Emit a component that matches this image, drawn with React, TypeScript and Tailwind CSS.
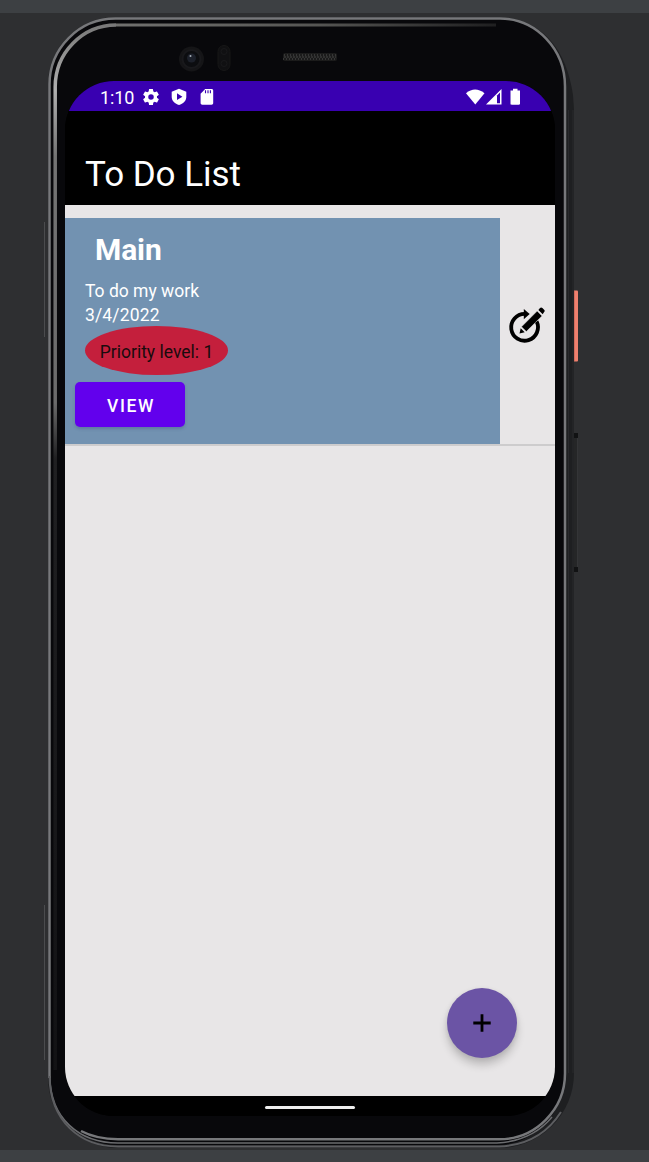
import React from "react";

function PhoneFrame() {
  return (
    <svg className="absolute inset-0" width="649" height="1162" viewBox="0 0 649 1162" fill="none" aria-hidden="true">
      <defs>
        <linearGradient id="inner" x1="0" y1="23" x2="0" y2="1140" gradientUnits="userSpaceOnUse">
          <stop offset="0" stopColor="#777777" />
          <stop offset="0.06" stopColor="#b0b0b0" />
          <stop offset="0.12" stopColor="#747474" />
          <stop offset="0.34" stopColor="#6b6b6b" />
          <stop offset="0.39" stopColor="#202022" />
          <stop offset="1" stopColor="#111113" />
        </linearGradient>
        <linearGradient id="topEdge" x1="110" y1="0" x2="530" y2="0" gradientUnits="userSpaceOnUse">
          <stop offset="0" stopColor="#727270" />
          <stop offset="0.5" stopColor="#555553" />
          <stop offset="1" stopColor="#151517" />
        </linearGradient>
      </defs>

      <path d="M44.5 222V337M44.5 905V1060" stroke="#4b4c4e" />
      <rect x="573" y="433" width="5" height="139" rx="1" fill="#252627" />
      <path d="M577.5 438V567" stroke="#343537" />
      <rect x="574" y="433" width="4" height="5" fill="#111213" />
      <rect x="574" y="567" width="4" height="5" fill="#111213" />
      <rect x="573.5" y="290.5" width="4.5" height="71" rx="1" fill="#ef806e" />
      <path d="M574 291V361" stroke="#b65c50" />

      <path d="M116 17H500Q562 22 573 95L574 110V1073A75 75 0 0 1 499 1148H118A70 70 0 0 1 48 1078V85A68 68 0 0 1 116 17Z" fill="#1e1f21" />
      <path d="M568.5 110V1073M573 110V1073" stroke="#292a2d" />
      <path d="M115 19H500A65 68 0 0 1 565 87V1073A68 72 0 0 1 497 1145H118A69 69 0 0 1 49 1076V85A66 66 0 0 1 115 19Z" fill="#08080b" />
      <path d="M49.5 1078V85A66 66 0 0 1 115.5 18.5H500A65 68 0 0 1 565 87V1073A66 66 0 0 1 499 1139.3H118Q96 1139 81 1131" stroke="#77787b" strokeWidth="2.5" />
      <path d="M50 1076C50 1119 80 1143 118 1143H497Q532 1141 552 1117" stroke="#6b6c6f" strokeWidth="1.5" />
      <path d="M49.5 1076C50 1121 80 1146.5 118 1146.5H499Q540 1145 561 1112" stroke="#5c5d60" strokeWidth="2" />
      <path d="M55.2 1070V87A61 62 0 0 1 116 25" stroke="url(#inner)" strokeWidth="3.5" />
      <path d="M116 25H496" stroke="url(#topEdge)" strokeWidth="3" />

      <circle cx="191.5" cy="59" r="12.5" fill="#151517" />
      <circle cx="191.5" cy="59" r="9" fill="#0c0d10" stroke="#19191c" strokeWidth="2" />
      <circle cx="191.5" cy="58" r="4.5" fill="#1c202a" />
      <circle cx="190.5" cy="56" r="1" fill="#a5adb7" />
      <rect x="218" y="45.5" width="12" height="25" rx="6" fill="#101012" stroke="#171717" />
      <circle cx="224" cy="51.5" r="3" stroke="#19191b" />
      <circle cx="224" cy="63.5" r="3" stroke="#19191b" />
      <rect x="283" y="53" width="54" height="8" rx="2" fill="#1b1b1b" />
      <path d="M284 55H337M283 59H337" stroke="#363636" strokeWidth="2" strokeDasharray="1 2" />
      <path d="M284 57H336" stroke="#303030" strokeWidth="2" strokeDasharray="2 1" />
    </svg>
  );
}

function StatusBar() {
  return (
    <header className="flex h-[30px] shrink-0 items-center bg-[#3900b1] pl-[35px] pr-[34px] pt-[2px] text-white">
      <span className="w-[40.5px] pt-px text-[18px] leading-[30px] tracking-[-0.15px]">1:10</span>
      <div className="flex items-center gap-[8px]">
        <svg width="20" height="20" viewBox="0 0 24 24" fill="currentColor"><path d="M19.14 12.94a7.43 7.43 0 0 0 .05-.94c0-.32-.02-.64-.07-.94l2.03-1.58a.5.5 0 0 0 .12-.61l-1.92-3.32a.49.49 0 0 0-.59-.22l-2.39.96a7 7 0 0 0-1.62-.94l-.36-2.54a.48.48 0 0 0-.48-.41h-3.84a.47.47 0 0 0-.47.41l-.36 2.54c-.59.24-1.13.57-1.62.94l-2.39-.96a.48.48 0 0 0-.59.22L2.74 8.87a.48.48 0 0 0 .12.61l2.03 1.58a7.6 7.6 0 0 0-.02 1.88l-2.03 1.58a.5.5 0 0 0-.12.61l1.92 3.32c.12.22.37.29.59.22l2.39-.96c.5.38 1.03.7 1.62.94l.36 2.54c.05.24.24.41.48.41h3.84c.24 0 .44-.17.47-.41l.36-2.54a7 7 0 0 0 1.62-.94l2.39.96c.22.08.47 0 .59-.22l1.92-3.32a.47.47 0 0 0-.12-.61zM12 15.3a3.3 3.3 0 1 1 0-6.6 3.3 3.3 0 0 1 0 6.6z" /></svg>
        <svg width="20" height="20" viewBox="0 0 20 20"><path fill="currentColor" d="m10 1.8 7.3 3v5.1c0 3.7-3.3 7-7.3 8-4-1-7.3-4.3-7.3-8V4.8z" /><path fill="#3900b1" d="M8 6.3v6.8l5.4-3.4z" /></svg>
        <svg width="20" height="20" viewBox="0 0 20 20"><path fill="currentColor" d="M8.2 2h6.3c1 0 1.7.7 1.7 1.7V16c0 1-.7 1.7-1.7 1.7H5.3c-1 0-1.7-.7-1.7-1.7V6.7z" /><path d="M8.5 3.3v3M11 3.3v3M13.4 3.3v3" stroke="#3900b1" strokeWidth="1.1" /></svg>
      </div>
      <svg className="ml-auto" width="55" height="18" viewBox="0 0 55 18">
        <path d="M0 5.2Q9 -2.3 18.5 5.2L9.3 16.4Z" fill="currentColor" />
        <path d="M20 16.6 35.5 1V16.6Z" fill="currentColor" />
        <path d="M31 7.4 34 4.5V15.3H31Z" fill="#3900b1" />
        <path d="M44.5 2.4H47V.8h4.5v1.6H54v13.1c0 .8-.4 1.2-1.2 1.2h-7.1c-.8 0-1.2-.4-1.2-1.2z" fill="currentColor" />
      </svg>
    </header>
  );
}

function EditIcon() {
  return (
    <svg width="38" height="38" viewBox="0 0 38 38" fill="none">
      <path d="M17.8 7.9A13.4 13.4 0 1 0 29.6 15.4" stroke="black" strokeWidth="3.8" />
      <path d="M16.8 3 22.7 8 16.8 13.3Z" fill="black" />
      <path d="M14.5 20.8 30.2 5.1 35 9.9 19.3 25.6Z" fill="black" stroke="#e8e6e7" strokeWidth=".5" />
      <path d="M12.5 27.5 13.7 22.2 17.7 26.2ZM31.4 3.9 33 2q1.2-1.2 2.4 0L37.1 3.7q1.2 1.2 0 2.4L35.7 8.2Z" fill="black" />
    </svg>
  );
}

export default function App() {
  return (
    <div className="relative flex h-[1162px] w-[649px] flex-col overflow-hidden border-y-[12px] border-t-[13px] border-[#3d4043] bg-[#2e2f31] font-[Roboto,sans-serif]">
      <div className="absolute -top-[13px] left-0"><PhoneFrame /></div>
      <main className="relative ml-[65px] mt-[68px] flex h-[1035px] w-[490px] shrink-0 flex-col overflow-hidden rounded-[49px] bg-black">
        <StatusBar />
        <div className="flex h-[94px] shrink-0 items-end bg-black px-[20px] pb-[9px]">
          <h1 className="text-[35px] leading-[42px] tracking-[-0.05px] text-white">To Do List</h1>
        </div>
        <section className="flex h-[241px] shrink-0 border-b-2 border-[#cdcccd] bg-[#e8e6e7] pt-[13px]">
          <article className="flex w-[435px] flex-col items-start bg-[#7292b1] text-white">
            <h2 className="ml-[30px] mt-[14px] text-[30px] font-bold leading-[36px] tracking-[-0.1px]">Main</h2>
            <p className="ml-[20px] mt-[11px] text-[17.5px] leading-[24px]">To do my work</p>
            <p className="ml-[20px] text-[17.5px] leading-[24px] tracking-[0.15px]">3/4/2022</p>
            <div className="ml-[20px] mt-[-1px] flex h-[49px] w-[143px] items-center justify-center rounded-[50%] bg-[#c41f3c] pt-[3px] text-[17.5px] text-[#190b0d]">Priority level: 1</div>
            <button className="ml-[10px] mt-[7px] h-[45px] w-[110px] rounded-[5px] bg-[#6200ed] pl-[2px] pt-[3px] text-[17.5px] font-medium tracking-[1.6px] shadow-[0_2px_3px_#394b8050]">VIEW</button>
          </article>
          <button aria-label="Edit task" className="flex w-[55px] items-center justify-center pb-[12px] pr-[3px]"><EditIcon /></button>
        </section>
        <div className="flex flex-1 items-end justify-end bg-[#e8e6e7] pb-[38px] pr-[38px]">
          <button aria-label="Add task" className="flex size-[70px] items-center justify-center rounded-full bg-[#6b54a5] shadow-[0_7px_9px_#00000030,0_1px_5px_#00000015]">
            <svg width="20" height="20" viewBox="0 0 20 20"><path d="M10 1.3v17.4M1.3 10h17.4" stroke="black" strokeWidth="2.8" /></svg>
          </button>
        </div>
        <footer className="flex h-[20px] shrink-0 items-center justify-center bg-black pt-[2px]">
          <div className="h-[3px] w-[90px] rounded-full bg-[#eee]" />
        </footer>
      </main>
    </div>
  );
}
